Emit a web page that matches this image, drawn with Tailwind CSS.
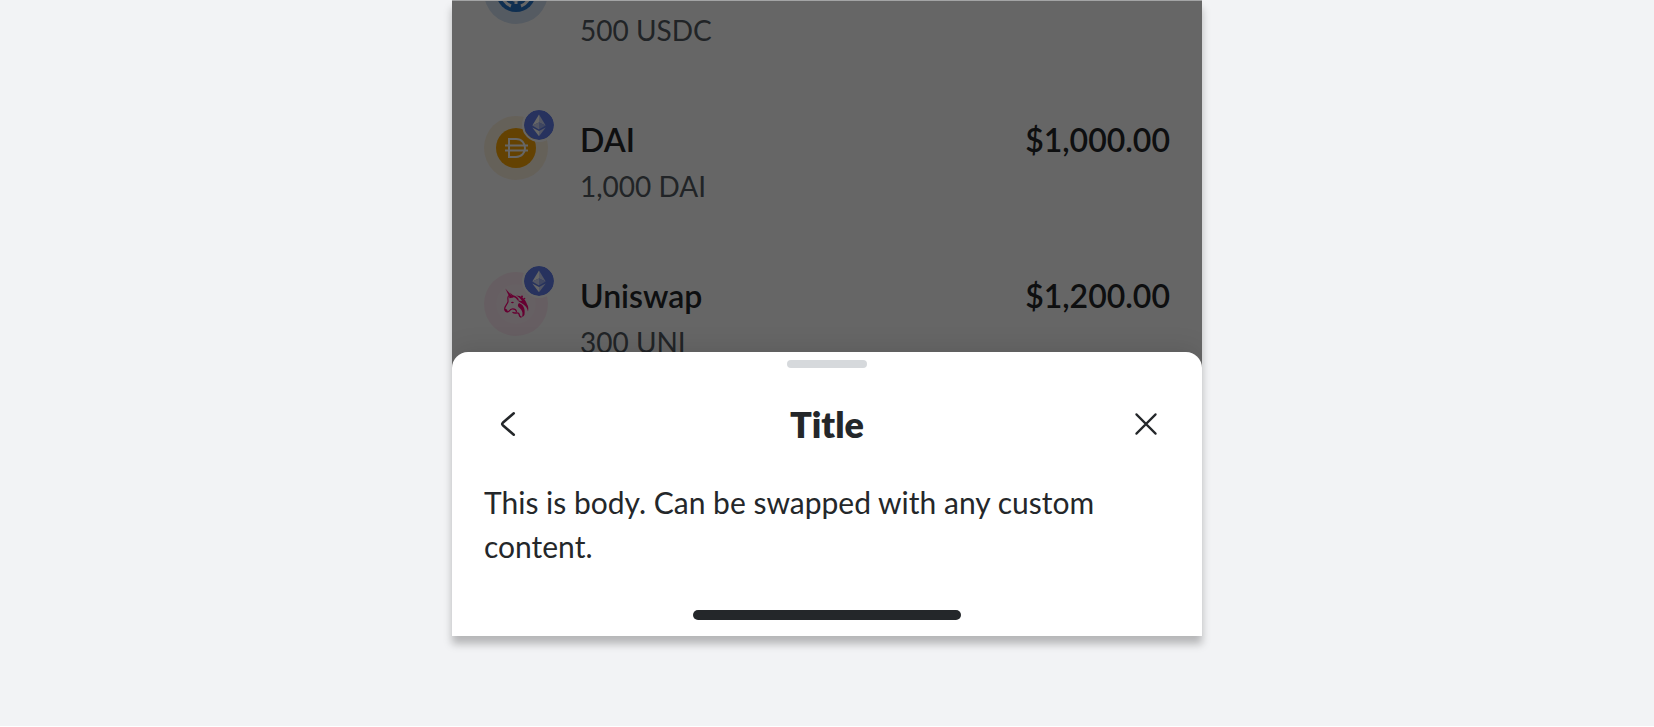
<!DOCTYPE html>
<html lang="en">
<head>
<meta charset="utf-8">
<meta name="viewport" content="width=device-width, initial-scale=1">
<title>Bottom sheet</title>
<script src="https://cdn.jsdelivr.net/npm/@tailwindcss/browser@4"></script>
</head>
<body class="min-h-screen overflow-hidden border-b border-white bg-[#f2f3f5] font-['Lato',sans-serif] text-[#24272a]">
<svg class="hidden" aria-hidden="true">
  <symbol id="eth" viewBox="0 0 30 30">
    <circle cx="15" cy="15" r="15" fill="#627eea"/>
    <path d="M15 4.5 8.3 15.6 15 12.6z" fill="#fff"/>
    <path d="M15 4.5v8.1l6.700 3z" fill="#d0d8f9"/>
    <path d="M8.3 15.6 15 12.6v7z" fill="#d0d8f9"/>
    <path d="M21.7 15.6 15 12.6v7z" fill="#a1b2f2"/>
    <path d="M8.3 17.4 15 26.2v-5.1z" fill="#fff"/>
    <path d="M21.7 17.4 15 26.2v-5.1z" fill="#d0d8f9"/>
  </symbol>
</svg>
<main class="mx-auto w-full max-w-[750px] bg-white shadow-[0_8px_8px_rgba(0,0,0,0.25)]">
  <section class="relative overflow-hidden" aria-label="Tokens">
    <ul class="-mt-18">
      <li class="flex gap-8 p-8">
        <div class="size-16 shrink-0">
          <svg class="size-16" viewBox="0 0 64 64" fill="none" aria-label="USDC" role="img">
            <circle cx="32" cy="32" r="32" fill="#2775ca" fill-opacity=".2"/>
            <circle cx="32" cy="32" r="20" fill="#2775ca"/>
            <path d="M27 18a15 15 0 0 0 0 28M37 18a15 15 0 0 1 0 28" stroke="#fff" stroke-width="3"/>
            <path d="M37 28c0-6-10-6-10-1s10 4 10 9-10 6-10 0M32 20v4M32 39v5" stroke="#fff" stroke-width="3"/>
          </svg>
        </div>
        <div class="grow pt-12">
          <p class="text-[28px] leading-11 text-[#535a61]">500 USDC</p>
        </div>
      </li>
      <li class="flex gap-8 p-8">
        <div class="relative size-16 shrink-0">
          <svg class="size-16" viewBox="0 0 64 64" fill="none" aria-hidden="true">
            <circle cx="32" cy="32" r="32" fill="#f5ac37" fill-opacity=".16"/>
            <circle cx="32" cy="32" r="20" fill="#f9a606"/>
            <path d="M25 23h7c12 0 12 18 0 18h-7zM21 29.500h23M21 34.500h23" stroke="#fff" stroke-width="2"/>
          </svg>
          <svg class="absolute -top-2 -right-2 size-[34px] rounded-full border-2 border-white" aria-hidden="true"><use href="#eth"/></svg>
        </div>
        <div class="grow">
          <h2 class="text-[32px] leading-12 font-semibold">DAI</h2>
          <p class="text-[28px] leading-11 text-[#535a61]">1,000 DAI</p>
        </div>
        <p class="text-[32px] leading-12 font-semibold">$1,000.00</p>
      </li>
      <li class="flex gap-8 p-8">
        <div class="relative size-16 shrink-0">
          <svg class="size-16" viewBox="0 0 64 64" fill="none" aria-hidden="true">
            <circle cx="32" cy="32" r="32" fill="#ff007a" fill-opacity=".08"/>
            <circle cx="32" cy="32" r="20" fill="#fff" fill-opacity=".2"/>
            <g fill="#ff007a">
              <path d="M21.300 16.500 29 25.200l-3 .8z"/>
              <path d="M25.700 20.500 30.500 24.500 28.500 25.500z"/>
              <path d="M32 23.500c5 0 9 3 10.500 7.500 1 2.500 2.500 3.500 1.500 8.500-.8-4-2.500-5.500-4.500-7-2.500-2-5-2.500-6-4.500 1.500.6 3 1 4.500 1-1.500-2.500-3.500-4.500-6-5.500z"/>
              <path d="M35 31c4 1.500 6.500 5 5.500 11.500-.5 1.500-1.500 2-2.500 2.500 1.500-5-.5-7.500-3-9.500-1.500-1.500-1.500-3 0-4.500z"/>
              <circle cx="38" cy="24.500" r="1"/>
              <circle cx="40.500" cy="26.500" r=".8"/>
              <path d="M26.800 30.500c1-1 2.500-.8 3.200 0-1 1-2.300 1-3.200 0z"/>
              <path d="M20.500 36.500 23 37.500l1 2.500c-2 .6-3.500-1-3.500-3.500z"/>
            </g>
            <g stroke="#ff007a" stroke-linecap="round" stroke-linejoin="round">
              <path d="M24.500 24c-1.500 2 0 4-.6 6-.8 2.500-3 4-3.200 6.500-.1 2 1.300 3.500 3 3.300 2-.3 1.800-2.500 4.300-2.800 2.500-.2 4 .5 4.500 2.500" stroke-width="1.200"/>
              <path d="M26 25.500c3-2 6-1 8 2M29 40.500c2 1.500 4-.5 5.500.8 1.500 1.400 0 2.700 2.500 3.700" stroke-width="1.400"/>
            </g>
          </svg>
          <svg class="absolute -top-2 -right-2 size-[34px] rounded-full border-2 border-white" aria-hidden="true"><use href="#eth"/></svg>
        </div>
        <div class="grow">
          <h2 class="text-[32px] leading-12 font-semibold">Uniswap</h2>
          <p class="text-[28px] leading-11 text-[#535a61]">300 UNI</p>
        </div>
        <p class="text-[32px] leading-12 font-semibold">$1,200.00</p>
      </li>
    </ul>
    <div class="absolute inset-0 border-t border-[#a3a4a5] bg-black/60"></div>
  </section>
  <section class="relative -mt-11 rounded-t-2xl bg-white pt-2 pb-4 shadow-[0_-4px_24px_rgba(0,0,0,0.1)] [clip-path:inset(-60px_0_0_0)]" role="dialog" aria-labelledby="sheet-title">
    <div class="mx-auto h-2 w-20 rounded-full bg-[#d6d9dc]"></div>
    <header class="mt-8 flex h-12 items-center justify-between px-8">
      <button class="flex size-12 items-center justify-center" type="button" aria-label="Back">
        <svg class="size-8" viewBox="0 0 32 32" fill="none" stroke="currentColor" stroke-width="2.500" stroke-linecap="round" stroke-linejoin="round" aria-hidden="true"><path d="M21.800 5.200 10.800 14.800Q9.600 16 10.800 17.200L21.800 26.800"/></svg>
      </button>
      <h1 id="sheet-title" class="text-[36px] leading-12 font-extrabold">Title</h1>
      <button class="flex size-12 items-center justify-center" type="button" aria-label="Close">
        <svg class="size-8" viewBox="0 0 32 32" fill="none" stroke="currentColor" stroke-width="2.200" stroke-linecap="round" aria-hidden="true"><path d="M6.400 6.400 25.600 25.600M25.600 6.400 6.400 25.600"/></svg>
      </button>
    </header>
    <p class="mt-8 px-8 text-[30px] leading-11">This is body. Can be swapped with any custom content.</p>
    <div class="mx-auto mt-[42px] h-2.5 w-[268px] rounded-full bg-[#24272a]"></div>
  </section>
</main>
</body>
</html>
